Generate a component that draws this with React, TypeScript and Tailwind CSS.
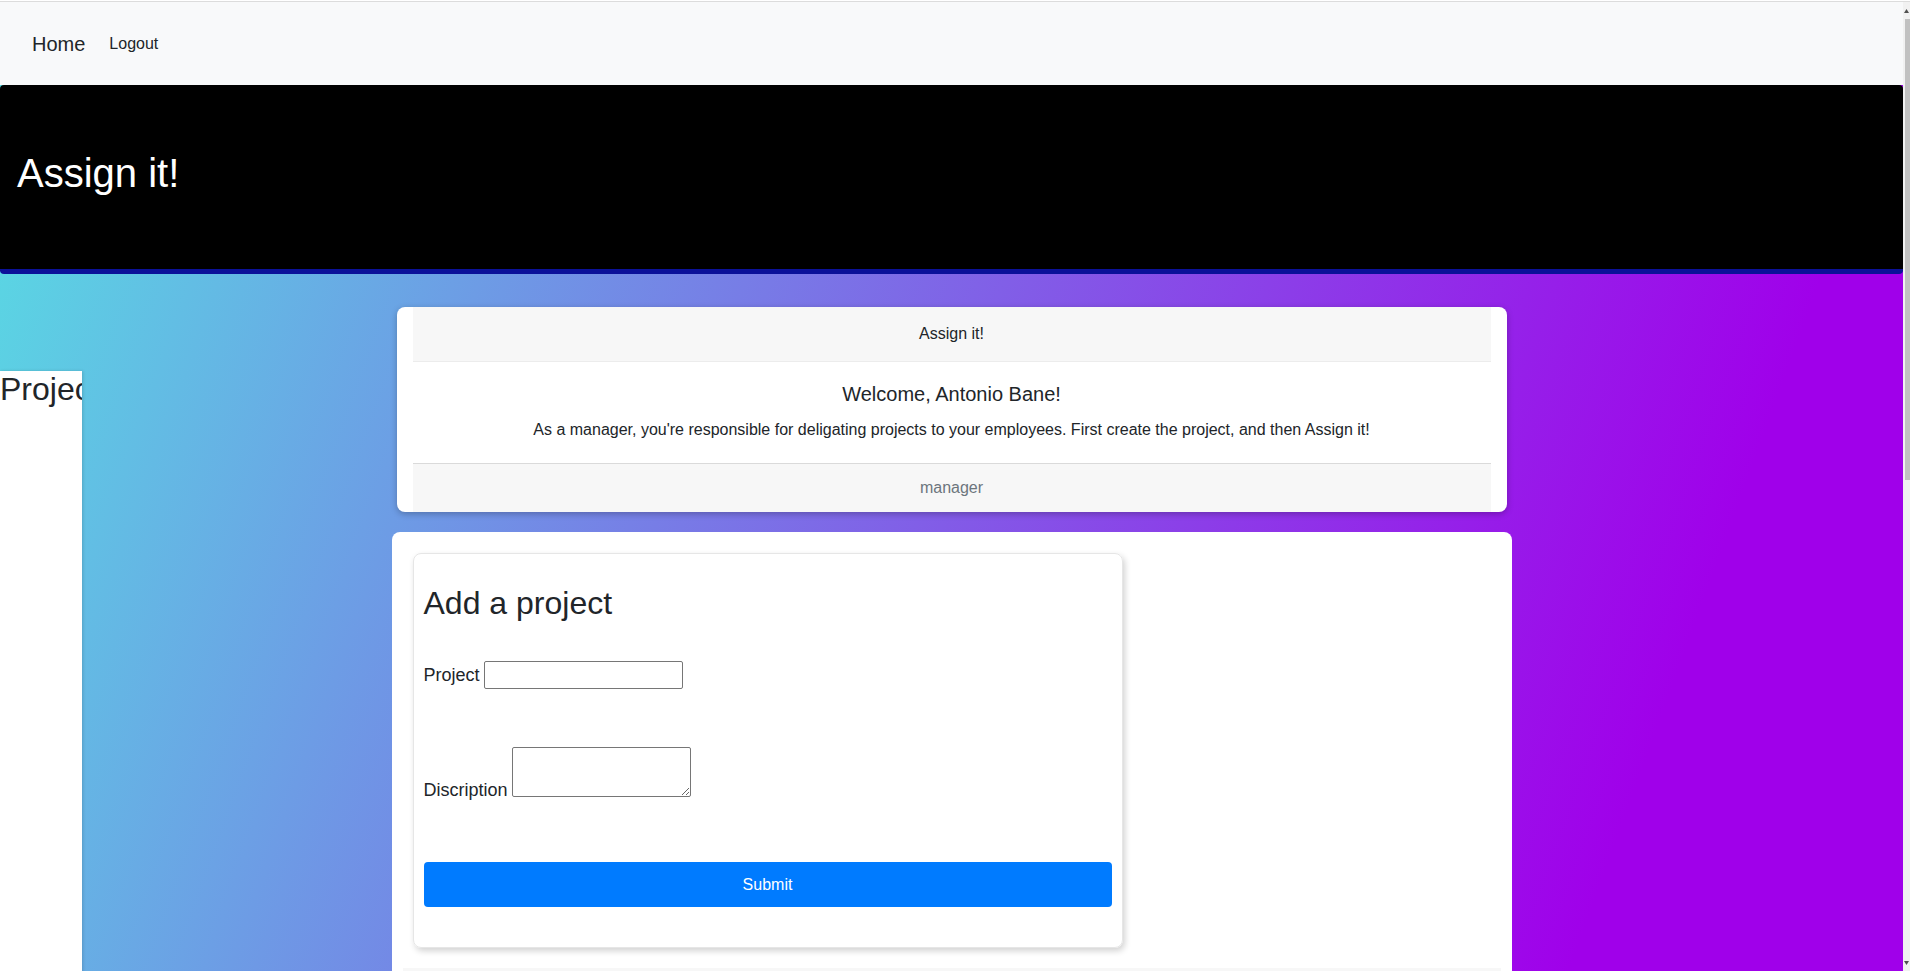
import React from 'react';

const font = { fontFamily: '"Liberation Sans", Arial, sans-serif' };

function Navbar() {
  return (
    <nav className="h-[83px] bg-[#f8f9fa] flex items-center pl-[32px] gap-[24px] text-[#212529]">
      <a className="text-[20px] leading-[30px]">Home</a>
      <a className="text-[16px] leading-[24px]">Logout</a>
    </nav>
  );
}

function Jumbotron() {
  return (
    <div className="h-[189px] bg-black rounded-[4px] border-b-[5px] border-[#0b1199] px-[17px] pt-[64px]">
      <h1 className="text-[40px] leading-[48px] text-white">Assign it!</h1>
    </div>
  );
}

function WelcomeCard() {
  return (
    <div className="mx-[5px] mt-[33px] bg-white rounded-lg px-4 overflow-hidden shadow-[0_2px_6px_rgba(0,0,0,0.25)]">
      <div className="h-[55px] bg-[#f7f7f7] border-b border-[#ececec] flex items-center justify-center text-[16px] text-[#212529]">
        Assign it!
      </div>
      <div className="pt-[20px] pb-[21px] text-center text-[#212529]">
        <h5 className="text-[20px] leading-[24px] mb-[12px]">Welcome, Antonio Bane!</h5>
        <p className="text-[16px] leading-[24px]">
          As a manager, you're responsible for deligating projects to your employees. First create the project, and then Assign it!
        </p>
      </div>
      <div className="h-[49px] bg-[#f7f7f7] border-t border-[#dadada] flex items-center justify-center text-[16px] text-[#6c757d]">
        manager
      </div>
    </div>
  );
}

function ProjectForm() {
  return (
    <div className="mt-[20px] bg-white rounded-lg pt-[21px] pb-[40px]">
      <div className="ml-[21px] w-[710px] h-[395px] border border-[#e6e6e6] rounded-lg shadow-[2px_3px_6px_rgba(0,0,0,0.18)] px-[10px] pt-[30px] text-[#212529]">
        <h2 className="text-[32px] leading-[38px]">Add a project</h2>
        <div className="mt-[39px] flex items-center gap-[4px]">
          <label className="text-[18px] leading-[22px]">Project</label>
          <input className="w-[199px] h-[28px] border border-[#767676] rounded-[2px] bg-white" />
        </div>
        <div className="mt-[58px] flex items-end gap-[4px]">
          <label className="text-[18px] leading-[18px] -mb-[2px]">Discription</label>
          <textarea className="w-[179px] h-[50px] border border-[#767676] rounded-[2px] bg-white align-bottom" />
        </div>
        <button className="mt-[65px] w-full h-[45px] bg-[#007bff] rounded-[4px] text-white text-[16px]">
          Submit
        </button>
      </div>
      <div className="mt-[20px] mx-[11px] h-[40px] bg-[#f7f7f7]" />
    </div>
  );
}

function Scrollbar() {
  return (
    <div className="w-[7px] h-full bg-[#f1f1f1] flex flex-col">
      <div className="h-[17px] flex items-center justify-end pr-[1px]">
        <svg width="5" height="4" viewBox="0 0 5 4">
          <path d="M2.5 0 L5 4 L0 4 Z" fill="#505050" />
        </svg>
      </div>
      <div className="ml-[2px] h-[461px] bg-[#c1c1c1]" />
      <div className="flex-1" />
      <div className="h-[17px] flex items-center justify-end pr-[1px]">
        <svg width="5" height="4" viewBox="0 0 5 4">
          <path d="M0 0 L5 0 L2.5 4 Z" fill="#505050" />
        </svg>
      </div>
    </div>
  );
}

export default function App() {
  return (
    <div className="w-[1910px] h-[971px] overflow-hidden flex flex-col bg-white" style={font}>
      <div className="h-[2px] border-b border-[#dcdcdc] bg-white" />
      <div className="flex-1 flex min-h-0">
        <div className="w-[1903px] flex flex-col min-h-0">
          <Navbar />
          <div className="flex-1 min-h-0 overflow-hidden bg-[linear-gradient(110deg,#58dce3_0%,#a000ea_85%)]">
            <Jumbotron />
            <div className="grid grid-cols-[1fr_1120px_1fr]">
              <div className="mt-[97px] w-[82px] bg-white overflow-hidden shadow-[1px_0_3px_rgba(0,0,0,0.15)]">
                <h2 className="text-[32px] leading-[36px] text-[#212529] whitespace-nowrap">Projects</h2>
              </div>
              <div>
                <WelcomeCard />
                <ProjectForm />
              </div>
              <div />
            </div>
          </div>
        </div>
        <Scrollbar />
      </div>
    </div>
  );
}
